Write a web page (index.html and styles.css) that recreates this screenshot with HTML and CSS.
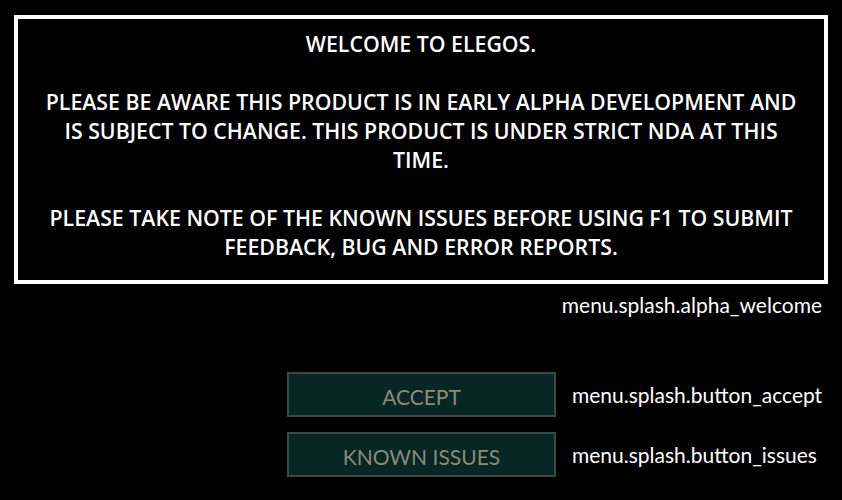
FILE: index.html
```html
<!DOCTYPE html>
<html>
<head>
<meta charset="utf-8">
<link rel="stylesheet" href="styles.css">
</head>
<body>
<div class="screen">
  <div class="notice">
    <p>WELCOME TO ELEGOS.</p>
    <p>PLEASE BE AWARE THIS PRODUCT IS IN EARLY ALPHA DEVELOPMENT AND<br>IS SUBJECT TO CHANGE. THIS PRODUCT IS UNDER STRICT NDA AT THIS<br>TIME.</p>
    <p>PLEASE TAKE NOTE OF THE KNOWN ISSUES BEFORE USING F1 TO SUBMIT<br>FEEDBACK, BUG AND ERROR REPORTS.</p>
  </div>
  <div class="key key-welcome">menu.splash.alpha_welcome</div>
  <div class="actions">
    <div class="action">
      <button class="btn">ACCEPT</button>
      <span class="key">menu.splash.button_accept</span>
    </div>
    <div class="action">
      <button class="btn">KNOWN ISSUES</button>
      <span class="key">menu.splash.button_issues</span>
    </div>
  </div>
</div>
</body>
</html>
```
FILE: styles.css
```css
html, body {
  margin: 0;
  padding: 0;
  background: #000;
}
.screen {
  width: 842px;
  height: 500px;
  padding: 15px 14px 0 14px;
  box-sizing: border-box;
  display: flex;
  flex-direction: column;
}
.notice {
  border: 4px solid #fff;
  height: 269px;
  box-sizing: border-box;
  padding: 10px 8px 0;
  color: #fff;
  font-family: "Open Sans", sans-serif;
  font-weight: 600;
  font-size: 21.3px;
  line-height: 29px;
  text-align: center;
}
.notice p {
  margin: 0 0 29px 0;
}
.notice p:last-child {
  margin-bottom: 0;
}
.key {
  color: #fff;
  font-family: "Lato", sans-serif;
  font-size: 21px;
  line-height: 24px;
}
.key-welcome {
  align-self: flex-end;
  margin-top: 9px;
  margin-right: 6px;
}
.actions {
  display: flex;
  flex-direction: column;
  gap: 15px;
  margin-top: 55px;
  padding-left: 273px;
}
.action {
  display: flex;
  align-items: center;
  gap: 16px;
}
.btn {
  width: 269px;
  height: 45px;
  background: #072624;
  border: 2px solid #3a4a42;
  color: #8c8a78;
  font-family: "Lato", sans-serif;
  font-size: 21px;
  padding: 3px 0 0 0;
  box-sizing: border-box;
}
```
